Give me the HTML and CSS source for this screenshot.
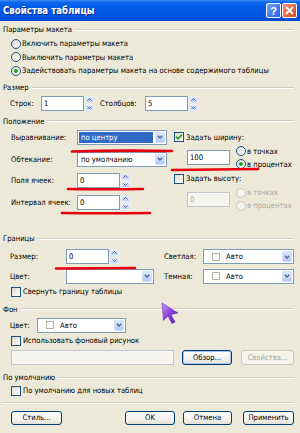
FILE: index.html
```html
<!DOCTYPE html>
<html>
  <head>
    <meta charset="utf-8" />
    <title>Свойства таблицы</title>
    <link rel="stylesheet" href="styles.css">
  </head>
  <body>
    <div class="titlebar">
      <span class="title">Свойства таблицы</span>
      <div class="caption-buttons">
        <span class="cap-btn help">?</span>
        <span class="cap-btn close">
          <svg width="9" height="9" viewBox="0 0 9 9"><path d="M1.5 1.5 L7.5 7.5 M7.5 1.5 L1.5 7.5" stroke="#fff" stroke-width="1.8" stroke-linecap="round"/></svg>
        </span>
      </div>
    </div>

    <div class="content">
      <div class="legend legend-first">Параметры макета</div>
      <div class="radio-list">
        <div class="opt"><span class="radio"></span>Включить параметры макета</div>
        <div class="opt"><span class="radio"></span>Выключить параметры макета</div>
        <div class="opt"><span class="radio checked"></span>Задействовать параметры макета на основе содержимого таблицы</div>
      </div>

      <div class="legend legend-mid">Размер</div>
      <div class="size-row">
        <span class="lbl lbl-rows">Строк:</span>
        <span class="field w43">1</span>
        <span class="spin">
          <span class="spin-btn"><svg width="5" height="3" viewBox="0 0 5 3"><path d="M0.5 2.5 L2.5 0.5 L4.5 2.5" fill="none" stroke="#4d6185"/></svg></span>
          <span class="spin-btn"><svg width="5" height="3" viewBox="0 0 5 3"><path d="M0.5 0.5 L2.5 2.5 L4.5 0.5" fill="none" stroke="#4d6185"/></svg></span>
        </span>
        <span class="lbl lbl-cols">Столбцов:</span>
        <span class="field w43">5</span>
        <span class="spin">
          <span class="spin-btn"><svg width="5" height="3" viewBox="0 0 5 3"><path d="M0.5 2.5 L2.5 0.5 L4.5 2.5" fill="none" stroke="#4d6185"/></svg></span>
          <span class="spin-btn"><svg width="5" height="3" viewBox="0 0 5 3"><path d="M0.5 0.5 L2.5 2.5 L4.5 0.5" fill="none" stroke="#4d6185"/></svg></span>
        </span>
      </div>

      <div class="legend legend-mid">Положение</div>
      <div class="position">
        <div class="pos-left">
          <div class="prow">
            <span class="lbl lbl-pos">Выравнивание:</span>
            <span class="combo w90">
              <span class="combo-text selected">по центру</span>
              <span class="combo-btn"><svg width="6" height="4" viewBox="0 0 6 4"><path d="M0.8 0.8 L3 3 L5.2 0.8" fill="none" stroke="#4d6185" stroke-width="1.3"/></svg></span>
            </span>
          </div>
          <div class="prow prow-2">
            <span class="lbl lbl-pos">Обтекание:</span>
            <span class="combo w90">
              <span class="combo-text">по умолчанию</span>
              <span class="combo-btn"><svg width="6" height="4" viewBox="0 0 6 4"><path d="M0.8 0.8 L3 3 L5.2 0.8" fill="none" stroke="#4d6185" stroke-width="1.3"/></svg></span>
            </span>
          </div>
          <div class="prow prow-3">
            <span class="lbl lbl-pos">Поля ячеек:</span>
            <span class="field w43">0</span>
            <span class="spin">
              <span class="spin-btn"><svg width="5" height="3" viewBox="0 0 5 3"><path d="M0.5 2.5 L2.5 0.5 L4.5 2.5" fill="none" stroke="#4d6185"/></svg></span>
              <span class="spin-btn"><svg width="5" height="3" viewBox="0 0 5 3"><path d="M0.5 0.5 L2.5 2.5 L4.5 0.5" fill="none" stroke="#4d6185"/></svg></span>
            </span>
          </div>
          <div class="prow prow-4">
            <span class="lbl lbl-pos">Интервал ячеек:</span>
            <span class="field w43">0</span>
            <span class="spin">
              <span class="spin-btn"><svg width="5" height="3" viewBox="0 0 5 3"><path d="M0.5 2.5 L2.5 0.5 L4.5 2.5" fill="none" stroke="#4d6185"/></svg></span>
              <span class="spin-btn"><svg width="5" height="3" viewBox="0 0 5 3"><path d="M0.5 0.5 L2.5 2.5 L4.5 0.5" fill="none" stroke="#4d6185"/></svg></span>
            </span>
          </div>
        </div>

        <div class="pos-right">
          <div class="cb-row">
            <span class="check checked"><svg width="8" height="8" viewBox="0 0 8 8"><path d="M1 3.8 L3 5.8 L7 1.6" fill="none" stroke="#21a121" stroke-width="1.6"/></svg></span>Задать ширину:
          </div>
          <div class="unit-block">
            <span class="field w43 unit-field">100</span>
            <div class="unit-opts">
              <div class="opt"><span class="radio"></span>в точках</div>
              <div class="opt"><span class="radio checked"></span>в процентах</div>
            </div>
          </div>
          <div class="cb-row">
            <span class="check"></span>Задать высоту:
          </div>
          <div class="unit-block">
            <span class="field w43 unit-field unit-field-2 disabled">0</span>
            <div class="unit-opts">
              <div class="opt disabled"><span class="radio"></span>в точках</div>
              <div class="opt disabled"><span class="radio"></span>в процентах</div>
            </div>
          </div>
        </div>
      </div>

      <div class="legend legend-borders">Границы</div>
      <div class="brow">
        <div class="bleft">
          <span class="lbl lbl-b">Размер:</span>
          <span class="field w43">0</span>
          <span class="spin">
            <span class="spin-btn"><svg width="5" height="3" viewBox="0 0 5 3"><path d="M0.5 2.5 L2.5 0.5 L4.5 2.5" fill="none" stroke="#4d6185"/></svg></span>
            <span class="spin-btn"><svg width="5" height="3" viewBox="0 0 5 3"><path d="M0.5 0.5 L2.5 2.5 L4.5 0.5" fill="none" stroke="#4d6185"/></svg></span>
          </span>
        </div>
        <span class="lbl lbl-shade">Светлая:</span>
        <span class="combo grow">
          <span class="combo-text"><span class="swatch"></span>Авто</span>
          <span class="combo-btn"><svg width="6" height="4" viewBox="0 0 6 4"><path d="M0.8 0.8 L3 3 L5.2 0.8" fill="none" stroke="#4d6185" stroke-width="1.3"/></svg></span>
        </span>
      </div>
      <div class="brow brow-2">
        <div class="bleft">
          <span class="lbl lbl-b">Цвет:</span>
          <span class="combo w88">
            <span class="combo-text"></span>
            <span class="combo-btn"><svg width="6" height="4" viewBox="0 0 6 4"><path d="M0.8 0.8 L3 3 L5.2 0.8" fill="none" stroke="#4d6185" stroke-width="1.3"/></svg></span>
          </span>
        </div>
        <span class="lbl lbl-shade">Темная:</span>
        <span class="combo grow">
          <span class="combo-text"><span class="swatch"></span>Авто</span>
          <span class="combo-btn"><svg width="6" height="4" viewBox="0 0 6 4"><path d="M0.8 0.8 L3 3 L5.2 0.8" fill="none" stroke="#4d6185" stroke-width="1.3"/></svg></span>
        </span>
      </div>
      <div class="check-row check-collapse"><span class="check"></span>Свернуть границу таблицы</div>

      <div class="legend legend-bg">Фон</div>
      <div class="bg-row">
        <span class="lbl lbl-bg">Цвет:</span>
        <span class="combo w89">
          <span class="combo-text"><span class="swatch"></span>Авто</span>
          <span class="combo-btn"><svg width="6" height="4" viewBox="0 0 6 4"><path d="M0.8 0.8 L3 3 L5.2 0.8" fill="none" stroke="#4d6185" stroke-width="1.3"/></svg></span>
        </span>
      </div>
      <div class="check-row check-image"><span class="check"></span>Использовать фоновый рисунок</div>
      <div class="image-row">
        <span class="field disabled image-field"></span>
        <span class="btn btn-browse">Обзор...</span>
        <span class="btn btn-props disabled">Свойства...</span>
      </div>

      <div class="legend legend-default">По умолчанию</div>
      <div class="check-row"><span class="check"></span>По умолчанию для новых таблиц</div>

      <div class="separator"></div>
      <div class="button-row">
        <span class="btn btn-style">Стиль...</span>
        <span class="btn btn-ok">OK</span>
        <span class="btn btn-cancel">Отмена</span>
        <span class="btn btn-apply">Применить</span>
      </div>
    </div>

    <svg class="overlay" width="300" height="433" viewBox="0 0 300 433">
      <defs>
        <linearGradient id="cursorFill" x1="0" y1="0" x2="1" y2="1">
          <stop offset="0" stop-color="#c79cf2"/>
          <stop offset="0.5" stop-color="#8a3ed8"/>
          <stop offset="1" stop-color="#5a1da8"/>
        </linearGradient>
      </defs>
      <g stroke="#e4000f" stroke-width="2.6" stroke-linecap="round" fill="none">
        <path d="M72 151.5 Q120 150 172 151"/>
        <path d="M172 170 Q215 169.5 258 169"/>
        <path d="M68 189 Q105 189.5 143 189"/>
        <path d="M62 213 Q105 213.5 150 213"/>
        <path d="M56 268.5 Q95 268 135 268"/>
      </g>
      <path d="M162 303 L178 313 L171 314.5 L175 322 L172 323.5 L168 316 L163.5 320.5 Z" fill="url(#cursorFill)" stroke="#6a2fb8" stroke-width="0.6"/>
    </svg>
  </body>
</html>
```

FILE: styles.css
```css
* {
  box-sizing: border-box;
}
html,
body {
  margin: 0;
}
body {
  width: 300px;
  height: 433px;
  overflow: hidden;
  position: relative;
  background: #ece9d8;
  font-family: "DejaVu Sans Condensed", "Liberation Sans", Arial, sans-serif;
  font-size: 7.6px;
  color: #000;
  white-space: nowrap;
}
.titlebar {
  height: 21px;
  display: flex;
  align-items: center;
  justify-content: space-between;
  padding: 0 3px 0 3px;
  background: linear-gradient(#3d8cf5 0%, #0a64ec 12%, #0058e6 45%, #0055e2 75%, #0049d0 100%);
}
.title {
  color: #fff;
  font-weight: bold;
  font-size: 9.6px;
  text-shadow: 1px 1px 0 #0a2a8c;
}
.caption-buttons {
  display: flex;
  gap: 1px;
}
.cap-btn {
  width: 15px;
  height: 15px;
  border: 1px solid #fff;
  border-radius: 2px;
  display: flex;
  align-items: center;
  justify-content: center;
  color: #fff;
  font-family: "Liberation Sans", Arial, sans-serif;
  font-weight: bold;
  font-size: 11px;
}
.help {
  background: linear-gradient(135deg, #6ea4fb, #245ee0);
}
.close {
  background: linear-gradient(135deg, #f09476, #d8431c);
}
.content {
  padding: 0 6px 0 3px;
}
.legend {
  display: flex;
  align-items: center;
  height: 13px;
}
.legend::after {
  content: "";
  flex: 1;
  margin-left: 3px;
  border-top: 1px solid #d0d0bf;
  border-bottom: 1px solid #fff;
}
.legend-first {
  margin-top: 2px;
}
.legend-mid {
  margin-top: 3.5px;
}
.legend-borders {
  margin-top: 19.5px;
}
.legend-bg {
  margin-top: 4.5px;
}
.legend-default {
  margin-top: 6.5px;
}
.lbl {
  flex: none;
}
.opt {
  height: 13.5px;
  display: flex;
  align-items: center;
}
.opt.disabled {
  color: #aca899;
}
.radio {
  width: 10px;
  height: 10px;
  flex: none;
  margin-right: 1px;
  border: 1px solid #1c5180;
  border-radius: 50%;
  background: linear-gradient(135deg, #dcd9cf, #fff);
  position: relative;
}
.radio.checked::after {
  content: "";
  position: absolute;
  left: 2px;
  top: 2px;
  width: 4px;
  height: 4px;
  border-radius: 50%;
  background: #21a121;
}
.opt.disabled .radio {
  border-color: #cac8bb;
  background: #f4f3ee;
}
.radio-list {
  margin-top: 1px;
  padding-left: 8px;
}
.field {
  height: 15px;
  flex: none;
  display: flex;
  align-items: center;
  padding-left: 2px;
  border: 1px solid #7f9db9;
  background: #fff;
}
.field.disabled {
  border-color: #c0c6cf;
  background: #f5f4ef;
  color: #aca899;
}
.w43 {
  width: 43px;
}
.spin {
  width: 9px;
  height: 15px;
  flex: none;
  margin-left: 1px;
  display: flex;
  flex-direction: column;
  gap: 1px;
}
.spin-btn {
  flex: 1;
  display: flex;
  align-items: center;
  justify-content: center;
  border-radius: 1px;
  background: linear-gradient(#e2ebfd, #b9cdf8);
  border: 1px solid #e6eefc;
}
.size-row {
  margin-top: 2px;
  height: 15px;
  display: flex;
  align-items: center;
  padding-left: 7px;
}
.lbl-rows {
  width: 31px;
}
.lbl-cols {
  width: 45px;
  margin-left: 6px;
}
.position {
  display: flex;
  margin-top: 2px;
  padding-left: 8px;
}
.pos-left {
  width: 163px;
  flex: none;
}
.pos-right {
  flex: 1;
}
.prow {
  height: 15px;
  display: flex;
  align-items: center;
}
.prow-2 {
  margin-top: 7px;
}
.prow-3 {
  margin-top: 6.5px;
}
.prow-4 {
  margin-top: 7px;
}
.lbl-pos {
  width: 66px;
}
.combo {
  height: 15px;
  flex: none;
  display: flex;
  border: 1px solid #7f9db9;
  background: #fff;
}
.combo.grow {
  flex: 1;
}
.w90 {
  width: 90px;
}
.w88 {
  width: 88px;
}
.w89 {
  width: 89px;
}
.combo-text {
  flex: 1;
  display: flex;
  align-items: center;
  padding-left: 2px;
  margin: 1px;
}
.combo-text.selected {
  background: #316ac5;
  color: #fff;
}
.combo-btn {
  width: 10px;
  margin: 1px;
  display: flex;
  align-items: center;
  justify-content: center;
  border-radius: 1px;
  background: linear-gradient(#dce7fd, #b3c9f7);
  border: 1px solid #d8e3fb;
}
.swatch {
  width: 8px;
  height: 8px;
  margin-left: 5px;
  margin-right: 6px;
  border: 1px solid #b4b1a5;
  background: #fff;
}
.check {
  width: 10px;
  height: 10px;
  flex: none;
  margin-right: 2px;
  border: 1px solid #1c5180;
  background: linear-gradient(135deg, #dcd9cf, #fff);
  display: flex;
  align-items: center;
  justify-content: center;
}
.cb-row {
  height: 15px;
  display: flex;
  align-items: center;
}
.unit-block {
  display: flex;
  height: 26.5px;
  padding-left: 13px;
}
.unit-field {
  margin-top: 5px;
}
.unit-field-2 {
  margin-top: 6px;
}
.unit-opts {
  margin-left: 6px;
}
.unit-opts .opt {
  height: 13.25px;
}
.brow {
  margin-top: 3.5px;
  height: 16px;
  display: flex;
  align-items: center;
  padding-left: 7px;
}
.bleft {
  width: 154px;
  flex: none;
  display: flex;
  align-items: center;
}
.lbl-b {
  width: 56px;
}
.lbl-shade {
  width: 39px;
}
.check-row {
  height: 13px;
  display: flex;
  align-items: center;
  padding-left: 8px;
}
.check-collapse {
  margin-top: 1px;
}
.bg-row {
  margin-top: 2px;
  height: 15px;
  display: flex;
  align-items: center;
  padding-left: 7px;
}
.lbl-bg {
  width: 27px;
}
.check-image {
  margin-top: 1.5px;
}
.image-row {
  margin-top: 2.5px;
  height: 15px;
  display: flex;
  padding-left: 8px;
}
.image-field {
  width: 163px;
}
.btn {
  height: 100%;
  flex: none;
  display: flex;
  align-items: center;
  justify-content: center;
  border: 1px solid #003c74;
  border-radius: 3px;
  background: linear-gradient(#ffffff, #f3f2ed 60%, #e3e0d6);
}
.btn.disabled {
  border-color: #c9c7ba;
  color: #aca899;
  background: #f5f4ea;
}
.btn-browse {
  width: 50px;
  margin-left: 8px;
  box-shadow: inset 0 0 0 1px #a9c3f0;
}
.btn-props {
  width: 53px;
  margin-left: 9px;
}
.separator {
  margin-top: 4.5px;
  border-top: 1px solid #d0d0bf;
  border-bottom: 1px solid #fff;
}
.button-row {
  margin-top: 7px;
  height: 14px;
  display: flex;
  padding-left: 8px;
}
.btn-style {
  width: 51px;
}
.btn-ok {
  width: 50px;
  margin-left: 63px;
}
.btn-cancel {
  width: 49px;
  margin-left: 8px;
}
.btn-apply {
  width: 51px;
  margin-left: 11px;
}
.overlay {
  position: absolute;
  left: 0;
  top: 0;
  pointer-events: none;
}
```
